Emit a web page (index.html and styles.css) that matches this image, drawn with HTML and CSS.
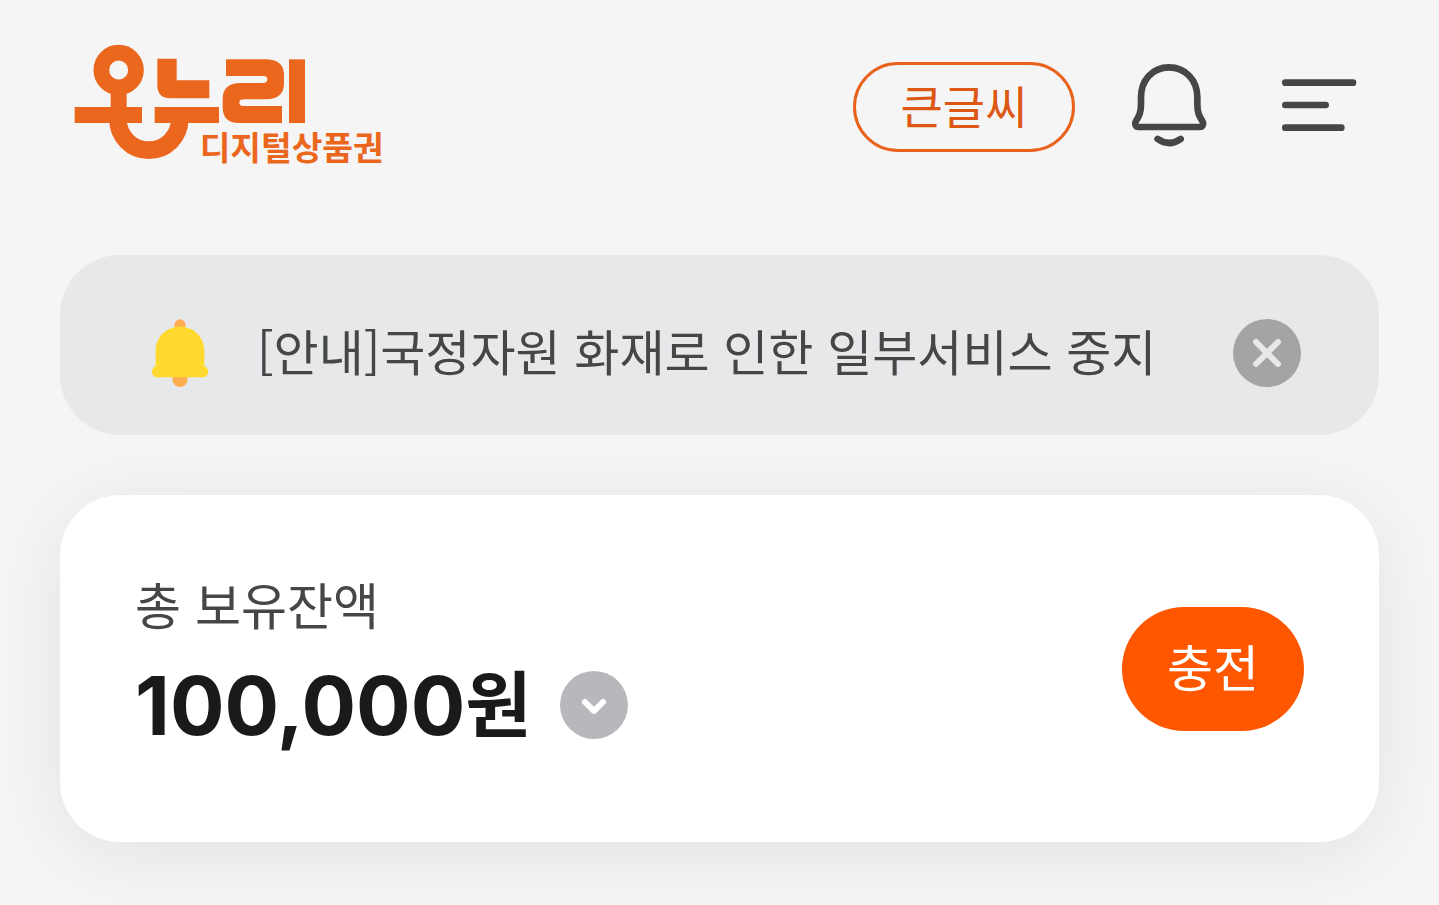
FILE: index.html
```html
<!DOCTYPE html>
<html lang="ko">
<head>
<meta charset="utf-8">
<meta name="viewport" content="width=device-width, initial-scale=1">
<title>온누리 디지털상품권</title>
<link rel="stylesheet" href="styles.css">
</head>
<body>
<header class="header">
  <a class="logo" href="#" aria-label="온누리 디지털상품권">
    <svg class="logo-mark" viewBox="42 42 930 366">
      <circle class="logo-line" cx="176" cy="120" r="52" stroke-width="47"/>
      <path class="logo-line" d="M174 268a92.500 92.500 0 0 0 185 0" stroke-width="53"/>
      <rect x="152" y="182" width="48" height="60"/>
      <rect x="44" y="231" width="202" height="48"/>
      <rect x="284" y="231" width="193" height="48"/>
      <path d="M292 86h58v65h98v54H332q-40 0-40-40z"/>
      <path d="M498 88h118q56 0 56 48v24q0 48-54 48h-66q-14 0-14 10t14 10h114v51H536q-48 0-48-48v-24q0-48 54-48h66q14 0 14-11t-14-10H498z"/>
      <rect x="687" y="88" width="48" height="191"/>
      <text class="logo-text" x="419" y="390">디지털상품권</text>
    </svg>
  </a>
  <nav class="actions">
    <button class="size-button" type="button">큰글씨</button>
    <button class="icon-button" type="button" aria-label="알림">
      <svg class="icon" width="76" height="88" viewBox="64 38 228 264">
        <path d="M178 51C128 51 94 90 94 140v22c0 26-6 36-15 50-5 9-1 18 8 18h183c9 0 13-9 8-18-9-14-15-24-15-50v-22c0-50-35-89-85-89z"/>
        <path d="M144 266q35 24 69 0"/>
      </svg>
    </button>
    <button class="icon-button menu-button" type="button" aria-label="메뉴">
      <svg class="icon" width="76" height="60" viewBox="514 80 228 180">
        <path d="M527 97h203M527 164h121M527 232h168"/>
      </svg>
    </button>
  </nav>
</header>
<main class="content">
  <section class="notice">
    <svg class="notice-bell" width="58" height="68" viewBox="62 56 174 204">
      <circle cx="149" cy="74" r="17" fill="#ffad52"/>
      <circle cx="149" cy="237" r="23" fill="#ffad52"/>
      <path d="M149 79c-42 0-73 31-73 73v46c-15 3-15 33 4 33h138c20 0 20-30 4-33v-46c0-42-31-73-73-73z" fill="#ffd92e"/>
    </svg>
    <p class="notice-text">[안내]국정자원 화재로 인한 일부서비스 중지</p>
    <button class="round-button close-button" type="button" aria-label="닫기">
      <svg width="68" height="68" viewBox="0 0 68 68"><path d="M23 23l22 22M45 23L23 45" stroke="#e7e8ea" stroke-width="6"/></svg>
    </button>
  </section>
  <section class="card">
    <div>
      <h1 class="balance-label">총 보유잔액</h1>
      <div class="balance-row">
        <p class="balance">100,000<span class="unit">원</span></p>
        <button class="round-button detail-button" type="button" aria-label="잔액 상세">
          <svg width="68" height="68" viewBox="0 0 68 68"><path d="M25 31l9 9 9-9" stroke="#fff" stroke-width="6"/></svg>
        </button>
      </div>
    </div>
    <button class="charge-button" type="button">충전</button>
  </section>
</main>
</body>
</html>
```
FILE: styles.css
```css
* {
  box-sizing: border-box;
}

body {
  margin: 0;
  padding: 44px 60px 64px;
  background: #f5f5f5;
  color: #444648;
  font-family: "Noto Sans CJK KR", sans-serif;
}

button {
  padding: 0;
  border: 0;
  background: none;
  font-family: inherit;
  cursor: pointer;
}

svg {
  display: block;
}

h1,
p {
  margin: 0;
}

.header {
  display: flex;
  align-items: center;
  justify-content: space-between;
  padding: 0 22px 0 14px;
  margin-bottom: 89px;
}

.logo-mark {
  width: 310px;
  height: 122px;
  overflow: visible;
  fill: #ec671e;
}

.logo-line {
  fill: none;
  stroke: #ec671e;
}

.logo-text {
  font-size: 100px;
  font-weight: 700;
}

.actions {
  display: flex;
  align-items: center;
  padding-top: 4px;
}

.size-button {
  width: 222px;
  height: 90px;
  margin-right: 56px;
  padding-bottom: 6px;
  border: 3px solid #e8621c;
  border-radius: 45px;
  color: #dc5814;
  font-size: 46px;
  line-height: 66px;
}

.menu-button {
  margin-left: 74px;
}

.icon {
  fill: none;
  stroke: #444648;
  stroke-width: 20;
  stroke-linecap: round;
  stroke-linejoin: round;
}

.content {
  display: grid;
  gap: 60px;
}

.notice {
  display: flex;
  align-items: center;
  padding: 64px 78px 48px 91px;
  border-radius: 60px;
  background: #e7e8ea;
}

.notice-text {
  flex: 1;
  margin-left: 48px;
  padding-bottom: 6px;
  font-size: 49px;
  line-height: 62px;
  white-space: nowrap;
}

.round-button {
  flex: none;
  width: 68px;
  height: 68px;
  border-radius: 50%;
}

.round-button svg {
  fill: none;
  stroke-linecap: round;
  stroke-linejoin: round;
}

.close-button {
  background: #a3a4a6;
}

.detail-button {
  background: #b7b8bc;
}

.card {
  display: flex;
  align-items: center;
  justify-content: space-between;
  padding: 75px;
  border-radius: 60px;
  background: #fff;
  box-shadow: 0 12px 80px rgba(0, 0, 0, 0.08);
}

.balance-label {
  padding-bottom: 6px;
  font-size: 50px;
  font-weight: 400;
  line-height: 66px;
}

.balance-row {
  display: flex;
  align-items: center;
  gap: 28px;
}

.balance {
  padding-top: 4px;
  color: #1a1a1a;
  font-family: Inter, "Noto Sans CJK KR", sans-serif;
  font-size: 81px;
  font-weight: 700;
  line-height: 121px;
}

.unit {
  font-size: 72px;
  line-height: 72px;
  vertical-align: 4px;
}

.charge-button {
  width: 182px;
  height: 124px;
  padding-bottom: 8px;
  border-radius: 62px;
  background: #ff5700;
  color: #fff;
  font-size: 50px;
  line-height: 72px;
}
```
